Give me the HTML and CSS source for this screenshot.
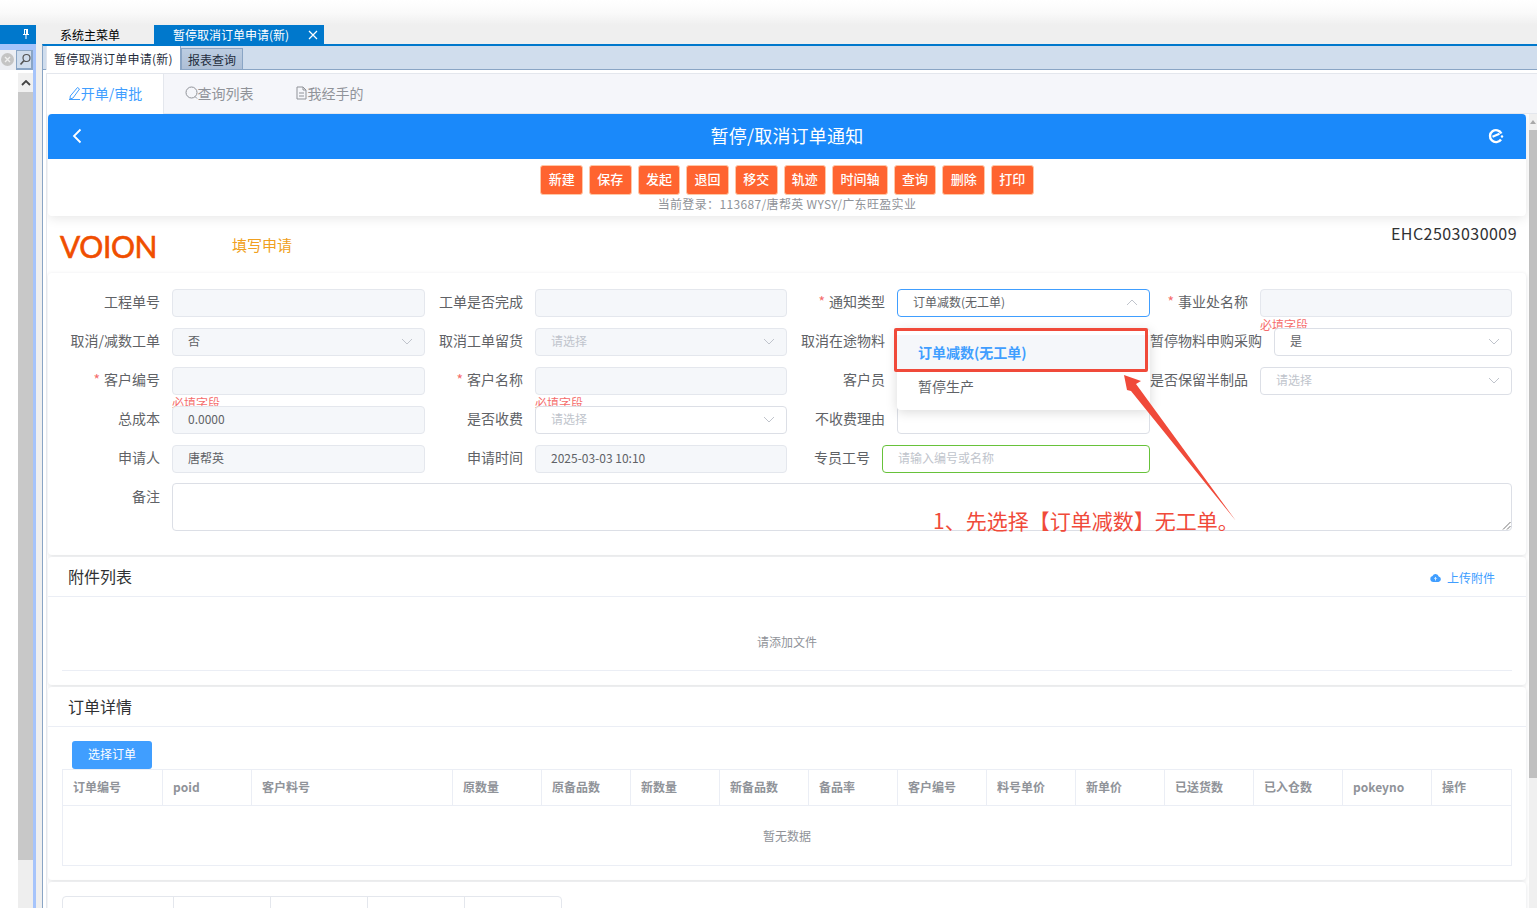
FILE: index.html
```html
<!DOCTYPE html>
<html lang="zh-CN">
<head>
    <meta charset="UTF-8">
    <meta name="viewport" content="width=device-width, initial-scale=1.0">
    <title>暂停/取消订单通知</title>
    <link rel="stylesheet" href="styles.css">
</head>
<body>
    <div class="top-fade"></div>

    <div class="shell">
        <!-- left dock -->
        <aside class="dock">
            <div class="dock-head">
                <svg class="pin" width="10" height="12" viewBox="0 0 10 12"><path d="M3 1h4v5h1v1H5.500v4h-1V7H2V6h1zM4 2v4h1V2z" fill="#fff"/></svg>
            </div>
            <div class="dock-search">
                <span class="dock-clear">
                    <svg width="13" height="13" viewBox="0 0 13 13"><circle cx="6.500" cy="6.500" r="6.500" fill="#c4c4c4"/><path d="M4 4l5 5M9 4l-5 5" stroke="#eee" stroke-width="1.400"/></svg>
                </span>
                <span class="dock-find">
                    <svg width="12" height="13" viewBox="0 0 12 13"><circle cx="7.500" cy="5" r="3.500" fill="none" stroke="#555" stroke-width="1.200"/><path d="M5 7.500L1.500 11.500" stroke="#555" stroke-width="1.600"/></svg>
                </span>
            </div>
            <div class="dock-body">
                <div class="dock-scroll">
                    <div class="dock-up">
                        <svg width="10" height="6" viewBox="0 0 10 6"><path d="M1 5l4-4 4 4" fill="none" stroke="#444" stroke-width="1.800"/></svg>
                    </div>
                    <div class="dock-thumb"></div>
                </div>
            </div>
        </aside>

        <div class="workspace">
            <nav class="doc-tabs">
                <span class="doc-tab">系统主菜单</span>
                <span class="doc-tab doc-tab-on">暂停取消订单申请(新)
                    <svg class="doc-close" width="10" height="10" viewBox="0 0 10 10"><path d="M1 1l8 8M9 1l-8 8" stroke="#fff" stroke-width="1.200"/></svg>
                </span>
            </nav>

            <div class="frame">
                <div class="sub-tabs">
                    <span class="sub-tab sub-tab-on">暂停取消订单申请(新)</span>
                    <span class="sub-tab">报表查询</span>
                </div>

                <div class="frame-body">
                    <div class="mode-tabs">
                        <span class="mode-tab mode-tab-on">
                            <svg width="13" height="14" viewBox="0 0 13 14"><path d="M9.500 1.500l2 1.500L5 12l-3 1 .3-3zM1 13.500h11" fill="none" stroke="#409eff" stroke-width="1"/></svg>开单/审批
                        </span>
                        <span class="mode-tab">
                            <svg width="13" height="14" viewBox="0 0 13 14"><circle cx="6.500" cy="6.500" r="5.500" fill="none" stroke="#909399" stroke-width="1"/><path d="M10 10.500l2 2" stroke="#909399"/></svg>查询列表
                        </span>
                        <span class="mode-tab">
                            <svg width="13" height="14" viewBox="0 0 13 14"><path d="M2 1h6l3 3v9H2zM8 1v3h3M4 7h5M4 10h5" fill="none" stroke="#909399" stroke-width="1"/></svg>我经手的
                        </span>
                    </div>

                    <div class="scroll-area">
                        <div class="content">
                            <section class="head-card">
                                <header class="title-bar">
                                    <svg class="title-back" width="10" height="16" viewBox="0 0 10 16"><path d="M8.500 1.500L2 8l6.500 6.500" fill="none" stroke="#fff" stroke-width="1.800"/></svg>
                                    <h1>暂停/取消订单通知</h1>
                                    <svg class="title-refresh" width="16" height="16" viewBox="0 0 16 16"><path d="M13.400 5.500A6 6 0 1 0 13 11.500" fill="none" stroke="#fff" stroke-width="2.400"/><path d="M4.500 8.800l7-3" stroke="#fff" stroke-width="2.200"/><circle cx="14" cy="8.500" r="1.200" fill="#fff"/></svg>
                                </header>
                                <div class="actions">
                                    <div class="action-row">
                                        <button class="act">新建</button>
                                        <button class="act">保存</button>
                                        <button class="act">发起</button>
                                        <button class="act">退回</button>
                                        <button class="act">移交</button>
                                        <button class="act">轨迹</button>
                                        <button class="act">时间轴</button>
                                        <button class="act">查询</button>
                                        <button class="act">删除</button>
                                        <button class="act">打印</button>
                                    </div>
                                    <p class="login-info">当前登录：113687/唐帮英 WYSY/广东旺盈实业</p>
                                </div>
                            </section>

                            <div class="brand-row">
                                <span class="logo">VOION</span>
                                <span class="step">填写申请</span>
                                <span class="doc-no">EHC2503030009</span>
                            </div>

                            <section class="card form-card">
                                <div class="form-grid">
                                    <div class="field"><label class="lbl lbl-first">工程单号</label><div class="inp off"></div></div>
                                    <div class="field"><label class="lbl">工单是否完成</label><div class="inp off"></div></div>
                                    <div class="field"><label class="lbl"><i>*</i>通知类型</label>
                                        <div class="inp open">订单减数(无工单)
                                            <svg class="caret" width="12" height="7" viewBox="0 0 12 7"><path d="M1 6l5-5 5 5" fill="none" stroke="#c0c4cc"/></svg>
                                        </div>
                                    </div>
                                    <div class="field"><label class="lbl"><i>*</i>事业处名称</label>
                                        <div class="inp off"></div>
                                        <span class="err">必填字段</span>
                                    </div>

                                    <div class="field"><label class="lbl lbl-first">取消/减数工单</label>
                                        <div class="inp off">否<svg class="caret" width="12" height="7" viewBox="0 0 12 7"><path d="M1 1l5 5 5-5" fill="none" stroke="#c0c4cc"/></svg></div>
                                    </div>
                                    <div class="field"><label class="lbl">取消工单留货</label>
                                        <div class="inp off ph">请选择<svg class="caret" width="12" height="7" viewBox="0 0 12 7"><path d="M1 1l5 5 5-5" fill="none" stroke="#c0c4cc"/></svg></div>
                                    </div>
                                    <div class="field"><label class="lbl">取消在途物料</label><div class="inp"></div></div>
                                    <div class="field"><label class="lbl lbl-long">暂停物料申购采购</label>
                                        <div class="inp">是<svg class="caret" width="12" height="7" viewBox="0 0 12 7"><path d="M1 1l5 5 5-5" fill="none" stroke="#c0c4cc"/></svg></div>
                                    </div>

                                    <div class="field"><label class="lbl lbl-first"><i>*</i>客户编号</label>
                                        <div class="inp off"></div>
                                        <span class="err">必填字段</span>
                                    </div>
                                    <div class="field"><label class="lbl"><i>*</i>客户名称</label>
                                        <div class="inp off"></div>
                                        <span class="err">必填字段</span>
                                    </div>
                                    <div class="field"><label class="lbl">客户员</label><div class="inp"></div></div>
                                    <div class="field"><label class="lbl">是否保留半制品</label>
                                        <div class="inp ph">请选择<svg class="caret" width="12" height="7" viewBox="0 0 12 7"><path d="M1 1l5 5 5-5" fill="none" stroke="#c0c4cc"/></svg></div>
                                    </div>

                                    <div class="field"><label class="lbl lbl-first">总成本</label><div class="inp off">0.0000</div></div>
                                    <div class="field"><label class="lbl">是否收费</label>
                                        <div class="inp ph">请选择<svg class="caret" width="12" height="7" viewBox="0 0 12 7"><path d="M1 1l5 5 5-5" fill="none" stroke="#c0c4cc"/></svg></div>
                                    </div>
                                    <div class="field"><label class="lbl">不收费理由</label><div class="inp"></div></div>
                                    <div class="field"></div>

                                    <div class="field"><label class="lbl lbl-first">申请人</label><div class="inp off">唐帮英</div></div>
                                    <div class="field"><label class="lbl">申请时间</label><div class="inp off">2025-03-03 10:10</div></div>
                                    <div class="field"><label class="lbl lbl-short">专员工号</label><div class="inp ok ph">请输入编号或名称</div></div>
                                    <div class="field"></div>

                                    <div class="field field-full"><label class="lbl lbl-first">备注</label>
                                        <div class="inp note">
                                            <svg class="grip" width="9" height="9" viewBox="0 0 9 9"><path d="M8.500 1L1 8.500M8.500 5L5 8.500" stroke="#777"/></svg>
                                        </div>
                                    </div>
                                </div>
                            </section>

                            <section class="card files-card">
                                <header class="card-head">
                                    <h2>附件列表</h2>
                                    <a class="upload">
                                        <svg width="11" height="9" viewBox="0 0 11 9"><path d="M3 9a3 3 0 0 1-.5-5.900A3.300 3.300 0 0 1 8.700 3.500 2.800 2.800 0 0 1 8.500 9z" fill="#409eff"/><path d="M5.500 7.500V4.500M4.200 5.700l1.300-1.300 1.300 1.300" stroke="#fff" stroke-width=".8" fill="none"/></svg>上传附件
                                    </a>
                                </header>
                                <div class="files-empty">请添加文件</div>
                            </section>

                            <section class="card order-card">
                                <header class="card-head">
                                    <h2>订单详情</h2>
                                </header>
                                <div class="order-body">
                                    <button class="pick">选择订单</button>
                                    <div class="grid-table">
                                        <div class="grid-row">
                                            <span>订单编号</span><span>poid</span><span>客户料号</span><span>原数量</span><span>原备品数</span><span>新数量</span><span>新备品数</span><span>备品率</span><span>客户编号</span><span>料号单价</span><span>新单价</span><span>已送货数</span><span>已入仓数</span><span>pokeyno</span><span>操作</span>
                                        </div>
                                        <div class="grid-empty">暂无数据</div>
                                    </div>
                                </div>
                            </section>

                            <section class="card last-card">
                                <div class="bottom-tabs">
                                    <span></span><span></span><span></span><span></span><span></span>
                                </div>
                            </section>
                        </div>
                        <div class="page-scroll">
                            <div class="page-up"></div>
                            <div class="page-thumb"></div>
                        </div>
                    </div>
                </div>
            </div>
        </div>
    </div>

    <!-- dropdown and the red notes drawn on the screenshot -->
    <div class="dropdown">
        <div class="opt opt-on">订单减数(无工单)</div>
        <div class="opt">暂停生产</div>
    </div>
    <div class="note-box"></div>
    <svg class="note-arrow" width="130" height="160" viewBox="0 0 130 160"><polygon points="4,5 21,11 16,14 116,151 11,21 7,20" fill="#f04a3a"/></svg>
    <div class="note-text">1、先选择【订单减数】无工单。</div>
</body>
</html>
```

FILE: styles.css
```css
* {
    box-sizing: border-box;
}

html, body {
    height: 100%;
}

body {
    margin: 0;
    height: 908px;
    overflow: hidden;
    background-color: #fff;
    font-family: "Noto Sans CJK SC", "Noto Sans", sans-serif;
    font-size: 14px;
    color: #606266;
}

.top-fade {
    height: 25px;
    background: linear-gradient(#fff, #fafafa 50%, #efefef);
}

.shell {
    display: flex;
    height: 883px;
}

/* left dock */
.dock {
    width: 36px;
    flex: none;
    display: flex;
    flex-direction: column;
    border-right: 3px solid #a6c4fb;
}

.dock-head {
    height: 19px;
    margin-right: -3px;
    background-color: #0078cc;
    position: relative;
}

.pin {
    position: absolute;
    left: 21px;
    top: 3px;
}

.dock-search {
    height: 26px;
    padding-top: 6px;
    display: flex;
    align-items: stretch;
    background-color: #a6c4fb;
}

.dock-search svg {
    display: block;
}

.dock-clear {
    width: 16px;
    padding: 3px 0 0 1px;
    background-color: #eceef3;
}

.dock-find {
    width: 17px;
    padding: 2px 0 0 2px;
    background-color: #d0dded;
    border: 2px solid #8aa5c5;
    border-width: 1px 2px 2px 1px;
}

.dock-body {
    flex: 1;
    padding-left: 18px;
    margin-top: 3px;
}

.dock-scroll {
    height: 100%;
    background-color: #eee;
}

.dock-up {
    height: 19px;
    background-color: #f0f0f0;
    display: flex;
    align-items: center;
    justify-content: center;
}

.dock-thumb {
    height: 768px;
    background-color: #c8c8c8;
}

/* main area */
.workspace {
    flex: 1;
    min-width: 0;
    background-color: #efefef;
}

.doc-tabs {
    height: 19px;
    display: flex;
    padding-left: 18px;
    background-color: #efefef;
}

.doc-tab {
    width: 100px;
    padding-left: 6px;
    font-size: 12px;
    line-height: 19px;
    color: #000;
    white-space: nowrap;
}

.doc-tab-on {
    width: 170px;
    position: relative;
    padding-left: 19px;
    background-color: #0078cc;
    color: #fff;
}

.doc-close {
    position: absolute;
    left: 154px;
    top: 5px;
}

.frame {
    height: 864px;
    margin-left: 6px;
    background-color: #fff;
    border-top: 2px solid #0078cc;
    border-left: 1px solid #8aa5c5;
    display: flex;
    flex-direction: column;
}

.sub-tabs {
    height: 24px;
    flex: none;
    display: flex;
    align-items: flex-end;
    padding-left: 3px;
    background-color: #d0dded;
    border-bottom: 1px solid #8aa5c5;
}

.sub-tab {
    height: 21px;
    padding: 0 6px;
    font-size: 12px;
    line-height: 22px;
    color: #1f2d3d;
    background: linear-gradient(#bccde2, #aebfd6);
    border: 1px solid #8aa5c5;
    border-bottom: 0;
}

.sub-tab-on {
    height: 24px;
    width: 135px;
    padding: 0 7px;
    line-height: 25px;
    letter-spacing: 0.25px;
    background: #fff;
    margin-bottom: -1px;
    border-color: #8aa5c5;
    border-top: 0;
    border-left-color: #e0e4ec;
    white-space: nowrap;
}

.frame-body {
    flex: 1;
    min-height: 0;
    padding: 3px 0 0 3px;
    display: flex;
    flex-direction: column;
}

.mode-tabs {
    height: 41px;
    flex: none;
    display: flex;
    padding-bottom: 2px;
    background-color: #f5f6fa;
    border-top: 1px solid #e4e7ed;
    border-left: 1px solid #e4e7ed;
    border-bottom: 1px solid #e4e7ed;
}

.mode-tab {
    width: 110px;
    display: flex;
    align-items: center;
    justify-content: center;
    color: #909399;
    white-space: nowrap;
}

.mode-tab-on {
    width: 117px;
    color: #409eff;
    background-color: #fff;
    border-right: 1px solid #e4e7ed;
    margin-bottom: -3px;
    padding-bottom: 2px;
}

.scroll-area {
    flex: 1;
    min-height: 0;
    display: flex;
    overflow: hidden;
    border-left: 1px solid #e4e7ed;
}

.content {
    flex: 1;
    min-width: 0;
    padding: 0 3px 0 1px;
}

.page-scroll {
    width: 8px;
    flex: none;
    background-color: #f0f0f0;
}

.page-up {
    height: 16px;
    padding: 6px 0 0 1px;
}

.page-up::before {
    content: "";
    display: block;
    width: 0;
    border: 3px solid transparent;
    border-top: 0;
    border-bottom: 4px solid #a8a8a8;
}

.page-thumb {
    height: 648px;
    background-color: #c0c0c0;
}

.head-card {
    height: 102px;
    background-color: #fff;
    border-radius: 4px;
    box-shadow: 0 2px 12px rgba(0, 0, 0, 0.1);
    overflow: hidden;
}

.title-bar {
    height: 45px;
    display: flex;
    align-items: center;
    justify-content: space-between;
    padding: 0 22px 2px 24px;
    background-color: #1a89fa;
}

.title-back {
    margin-right: 4px;
}

.title-bar h1 {
    margin: 0 0 2px;
    font-size: 18px;
    font-weight: 400;
    letter-spacing: 0.2px;
    color: #fff;
}

.actions {
    padding-top: 6px;
    text-align: center;
}

.action-row {
    display: flex;
    justify-content: center;
    gap: 6px;
}

.act {
    height: 30px;
    padding: 0 7.300px 3px;
    border: 1px solid #ffc7a6;
    border-radius: 3px;
    background-color: #ff6430;
    color: #fff;
    font-family: inherit;
    font-size: 13px;
    font-weight: 500;
}

.login-info {
    margin: 1px 0 0;
    font-size: 12px;
    line-height: 16px;
    letter-spacing: 0.35px;
    color: #909399;
}

.brand-row {
    height: 57px;
    display: flex;
    align-items: flex-start;
    padding: 0 9px 0 12px;
}

.logo {
    width: 172px;
    margin-top: 10px;
    font-family: Lato, sans-serif;
    font-size: 30px;
    font-weight: 400;
    line-height: 40px;
    letter-spacing: -0.4px;
    -webkit-text-stroke: 0.6px #f04e00;
    color: #f04e00;
}

.step {
    margin-top: 18px;
    font-size: 15px;
    line-height: 22px;
    color: #f0a020;
}

.doc-no {
    margin: 6px 0 0 auto;
    font-size: 16px;
    line-height: 22px;
    letter-spacing: 0.46px;
    color: #303133;
}

.card {
    background-color: #fff;
    border-radius: 4px;
    box-shadow: 0 1px 4px rgba(0, 21, 41, 0.12);
    margin-bottom: 2px;
}

.form-card {
    height: 282px;
    padding: 16px 14px 0 12px;
}

.form-grid {
    display: grid;
    grid-template-columns: 365px 350px 351px 350px;
    grid-auto-rows: 28px;
    column-gap: 12px;
    row-gap: 11px;
}

.field {
    position: relative;
    display: flex;
    gap: 12px;
    min-width: 0;
}

.field-full {
    grid-column: 1 / -1;
    height: 48px;
    margin-top: -1px;
}

.lbl {
    flex: none;
    width: 86px;
    display: flex;
    justify-content: flex-end;
    line-height: 24px;
    white-space: nowrap;
}

.field-full .lbl {
    line-height: 26px;
}

.lbl-first {
    width: 100px;
}

.lbl-long {
    width: 112px;
    margin-left: -12px;
}

.lbl-short {
    width: 71px;
}

.lbl i {
    font-style: normal;
    color: #f56c6c;
    margin-right: 4px;
}

.inp {
    position: relative;
    flex: 1;
    min-width: 0;
    height: 28px;
    padding-left: 15px;
    border: 1px solid #dcdfe6;
    border-radius: 4px;
    background-color: #fff;
    font-size: 12px;
    line-height: 24px;
    color: #606266;
}

.off {
    background-color: #f5f7fa;
    border-color: #e4e7ed;
}

.ph {
    color: #c0c4cc;
}

.open {
    border-color: #409eff;
}

.ok {
    border-color: #67c23a;
}

.note {
    height: 48px;
}

.caret {
    position: absolute;
    right: 11px;
    top: 9px;
}

.grip {
    position: absolute;
    right: 0;
    bottom: 0;
}

.err {
    position: absolute;
    left: 112px;
    top: 30px;
    font-size: 12px;
    line-height: 12px;
    color: #f56c6c;
}

.field:nth-child(4) .err {
    left: 98px;
}

.field:nth-child(10) .err {
    left: 98px;
}

.card-head {
    height: 40px;
    display: flex;
    align-items: center;
    justify-content: space-between;
    padding: 0 31px 0 20px;
    border-bottom: 1px solid #ebeef5;
}

.card-head h2 {
    margin: 0 0 2px;
    font-size: 16px;
    font-weight: 400;
    color: #303133;
}

.upload {
    display: flex;
    align-items: center;
    gap: 6px;
    margin-top: 2px;
    font-size: 12px;
    color: #409eff;
}

.files-card {
    height: 128px;
}

.files-empty {
    height: 74px;
    margin: 0 14px;
    border-bottom: 1px solid #ebeef5;
    text-align: center;
    font-size: 12px;
    line-height: 90px;
    color: #909399;
}

.order-card {
    height: 193px;
}

.order-body {
    padding: 14px 14px 0;
}

.pick {
    display: block;
    width: 80px;
    height: 28px;
    margin-left: 10px;
    padding: 0 0 4px;
    border: none;
    border-radius: 3px;
    background-color: #409eff;
    color: #fff;
    font-family: inherit;
    font-size: 12px;
}

.grid-table {
    border: 1px solid #ebeef5;
}

.grid-row {
    display: grid;
    grid-template-columns: 100px 89px 201px 89px 89px 89px 89px 89px 89px 89px 89px 89px 89px 89px 1fr;
    height: 36px;
    border-bottom: 1px solid #ebeef5;
}

.grid-row span {
    padding-left: 10px;
    border-right: 1px solid #ebeef5;
    font-size: 12px;
    font-weight: 700;
    line-height: 33px;
    color: #909399;
}

.grid-row span:last-child {
    border-right: none;
}

.grid-empty {
    height: 59px;
    text-align: center;
    font-size: 12px;
    line-height: 60px;
    color: #909399;
}

.last-card {
    height: 60px;
    padding: 14px 14px 0;
}

.bottom-tabs {
    width: 500px;
    height: 40px;
    display: grid;
    grid-template-columns: 111px 97px 97px 97px 1fr;
    border: 1px solid #e4e7ed;
    border-radius: 4px 4px 0 0;
}

.bottom-tabs span {
    border-right: 1px solid #e4e7ed;
}

.bottom-tabs span:last-child {
    border-right: none;
}

/* overlays */
.dropdown {
    position: absolute;
    left: 897px;
    top: 329px;
    width: 253px;
    height: 81px;
    padding-top: 6px;
    background-color: #fff;
    border-radius: 4px;
    box-shadow: 0 2px 12px rgba(0, 0, 0, 0.15);
}

.opt {
    height: 34px;
    padding-left: 21px;
    line-height: 34px;
    font-size: 14px;
    color: #606266;
}

.opt-on {
    background-color: #f5f7fa;
    color: #409eff;
    font-weight: 700;
}

.note-box {
    position: absolute;
    left: 894px;
    top: 328px;
    width: 254px;
    height: 44px;
    border: 3px solid #f04a3a;
    border-radius: 2px;
}

.note-arrow {
    position: absolute;
    left: 1120px;
    top: 370px;
}

.note-text {
    position: absolute;
    left: 933px;
    top: 505px;
    font-size: 21px;
    line-height: 30px;
    color: #f04a3a;
    white-space: nowrap;
}
```
